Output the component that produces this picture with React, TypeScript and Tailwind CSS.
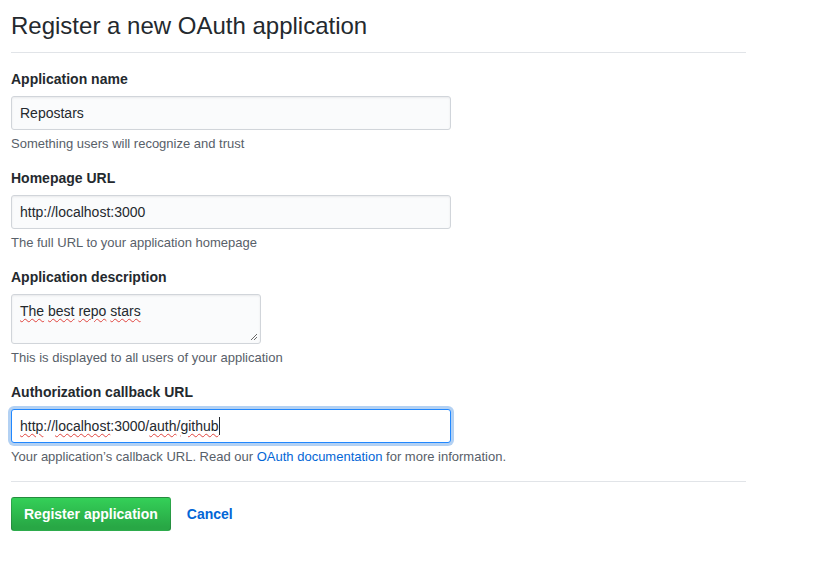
import React from 'react';

const Squiggle: React.FC<{ children: React.ReactNode }> = ({ children }) => (
  <span className="underline decoration-wavy decoration-[#e0443e] decoration-1 underline-offset-2">{children}</span>
);

const Group: React.FC<{ label: string; note: React.ReactNode; children: React.ReactNode }> = ({ label, note, children }) => (
  <div className="flex flex-col">
    <label className="text-[14px] font-bold leading-[21px] text-[#24292e] mb-[6px]">{label}</label>
    {children}
    <p className="text-[13px] leading-[18px] text-[#586069] mt-[5px] mb-px">{note}</p>
  </div>
);

const inputCls =
  'h-[34px] w-[440px] px-2 text-[14px] leading-5 text-[#24292e] bg-[#fafbfc] border border-[#d1d5da] rounded-[3px] shadow-[inset_0_1px_2px_rgba(27,31,35,0.075)] outline-none';

export default function App() {
  return (
    <div className="min-h-screen bg-white px-[11px] pt-2 font-['Liberation_Sans',Arial,sans-serif] text-[#24292e]">
      <div className="w-[735px]">
        <div className="pb-2 mb-4 border-b border-[#e1e4e8]">
          <h2 className="text-[24px] leading-9 font-normal">Register a new OAuth application</h2>
        </div>

        <div className="flex flex-col gap-[14px]">
          <Group label="Application name" note="Something users will recognize and trust">
            <input className={inputCls} defaultValue="Repostars" readOnly />
          </Group>

          <Group label="Homepage URL" note="The full URL to your application homepage">
            <input className={inputCls} defaultValue="http://localhost:3000" readOnly />
          </Group>

          <Group label="Application description" note="This is displayed to all users of your application">
            <div className="relative h-[50px] w-[250px] px-2 py-[6px] text-[14px] leading-5 bg-[#fafbfc] border border-[#d1d5da] rounded-[3px] shadow-[inset_0_1px_2px_rgba(27,31,35,0.075)]">
              <Squiggle>The</Squiggle> <Squiggle>best</Squiggle> <Squiggle>repo</Squiggle> <Squiggle>stars</Squiggle>
              <svg className="absolute right-[2px] bottom-[2px]" width="8" height="8" viewBox="0 0 8 8">
                <line x1="1" y1="7" x2="7" y2="1" stroke="#6a6a6a" strokeWidth="1" />
                <line x1="4" y1="7" x2="7" y2="4" stroke="#6a6a6a" strokeWidth="1" />
              </svg>
            </div>
          </Group>

          <Group
            label="Authorization callback URL"
            note={
              <>
                Your application’s callback URL. Read our <a className="text-[#0366d6]">OAuth documentation</a> for more information.
              </>
            }
          >
            <div className="flex items-center h-[34px] w-[440px] px-2 text-[14px] leading-5 bg-white border border-[#2188ff] rounded-[3px] shadow-[0_0_0_3px_rgba(3,102,214,0.3)]">
              <span>
                <Squiggle>http</Squiggle>://<Squiggle>localhost</Squiggle>:3000/<Squiggle>auth</Squiggle>/<Squiggle>github</Squiggle>
              </span>
              <span className="inline-block w-px h-[18px] bg-[#24292e]" />
            </div>
          </Group>
        </div>

        <div className="mt-[14px] pt-[15px] border-t border-[#e1e4e8] flex items-center gap-4">
          <button className="h-[34px] px-3 text-[14px] font-bold leading-5 text-white rounded-[3px] border border-[rgba(27,31,35,0.2)] bg-[linear-gradient(-180deg,#34d058_0%,#28a745_90%)]">
            Register application
          </button>
          <a className="text-[14px] font-bold text-[#0366d6]">Cancel</a>
        </div>
      </div>
    </div>
  );
}
